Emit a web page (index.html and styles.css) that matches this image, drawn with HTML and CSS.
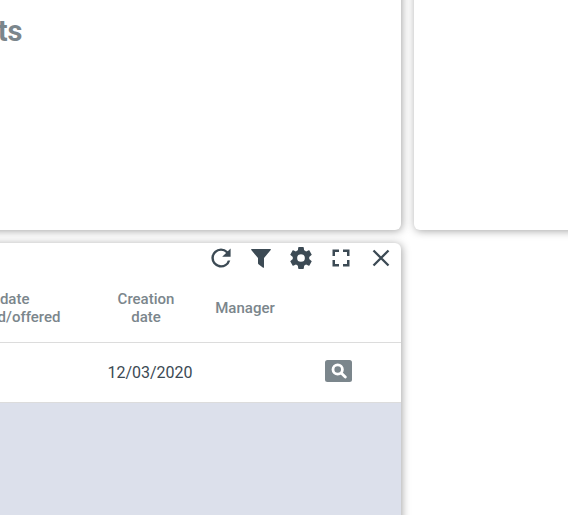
FILE: index.html
```
<!DOCTYPE html>
<html lang="en">
<head>
<meta charset="utf-8">
<title>Dashboard</title>
<link rel="stylesheet" href="styles.css">
</head>
<body>
<main class="board">
  <section class="card card-top"><h1 class="title">ts</h1></section>
  <section class="card card-top"></section>
  <section class="card card-table">
    <div class="toolbar">
      <svg class="tool" viewBox="2 2 20 20"><path d="M17.65 6.35A7.958 7.958 0 0 0 12 4a8 8 0 1 0 7.73 10h-2.08A5.99 5.99 0 0 1 12 18a6 6 0 1 1 0-12c1.66 0 3.14.69 4.22 1.78L13 11h7V4z"/></svg>
      <svg class="tool" viewBox="0 0 24 24"><path d="M2.700 3h18.600c.6 0 .8.700.4 1.100L15 12v9.300c0 .6-.5.700-.9.400L9.500 18.200c-.3-.2-.5-.5-.5-.9V12L2.300 4.100c-.4-.4-.2-1.100.4-1.100z"/></svg>
      <svg class="tool" viewBox="1.100 1.100 21.800 21.800"><path d="M12 15.500A3.500 3.500 0 0 1 8.500 12 3.500 3.500 0 0 1 12 8.500a3.500 3.500 0 0 1 3.500 3.500 3.500 3.500 0 0 1-3.500 3.500m7.430-2.530c.04-.32.070-.64.070-.97s-.03-.66-.07-1l2.110-1.630c.19-.15.240-.42.120-.64l-2-3.460c-.12-.22-.39-.3-.61-.22l-2.490 1c-.52-.39-1.060-.73-1.690-.98l-.37-2.650A.506.506 0 0 0 14 2h-4c-.25 0-.46.18-.5.42l-.37 2.650c-.63.25-1.170.59-1.690.98l-2.490-1c-.22-.08-.49 0-.61.22l-2 3.460c-.13.22-.07.49.12.64L4.570 11c-.04.34-.07.67-.07 1s.03.65.07.97l-2.110 1.660c-.19.15-.25.42-.12.64l2 3.460c.12.22.39.3.61.22l2.490-1.010c.52.4 1.060.74 1.690.99l.37 2.650c.04.24.25.42.5.42h4c.25 0 .46-.18.5-.42l.37-2.650c.63-.26 1.170-.59 1.690-.99l2.490 1.010c.22.08.49 0 .61-.22l2-3.460c.12-.22.070-.49-.12-.64z"/></svg>
      <svg class="tool" viewBox="0 0 24 24"><path d="M3.500 3.500H10V6H6v4H3.500zM14 3.500h6.500V10H18V6h-4zM3.500 14H6v4h4v2.500H3.500zM18 14h2.500v6.500H14V18h4z"/></svg>
      <svg class="tool" viewBox="0 0 24 24"><path d="M4.500 4.500l15 15M19.500 4.500l-15 15" class="line"/></svg>
    </div>
    <div class="row head">
      <div class="cell-first"><span class="short">date</span><span>d/offered</span></div>
      <div class="cell-date">Creation<br>date</div>
      <div class="cell-manager">Manager</div>
    </div>
    <div class="row data">
      <div class="cell-first"></div>
      <div class="cell-date">12/03/2020</div>
      <div class="cell-manager"></div>
      <button class="view" aria-label="View"><svg viewBox="0 0 16 16"><circle cx="6.700" cy="6.500" r="4.700"/><path d="M10.200 10l4.100 4"/></svg></button>
    </div>
    <div class="empty"></div>
  </section>
</main>
</body>
</html>
```
FILE: styles.css
```
* { box-sizing: border-box; }
body {
  display: flow-root;
  margin: 0;
  height: 515px;
  overflow: hidden;
  background: #fff;
  font-family: Roboto, sans-serif;
  color: #3c4a54;
}
.board {
  display: grid;
  grid-template-columns: 421px 1fr;
  grid-template-rows: 250px 1fr;
  gap: 13px;
  width: 608px;
  height: 555px;
  margin: -20px 0 0 -20px;
}
.card {
  background: #fff;
  box-shadow: 1px 1px 8px rgba(0, 0, 0, .36);
  overflow: hidden;
}
.card-top { border-radius: 0 0 6px 6px; padding-top: 20px; }
.card-table {
  display: flex;
  flex-direction: column;
  padding-left: 20px;
  border-radius: 6px 6px 0 0;
}
.title {
  display: flex;
  justify-content: flex-end;
  width: 42.5px;
  margin: 14px 0 0;
  font-size: 29px;
  line-height: 34px;
  font-weight: 700;
  color: #7b868c;
}
.toolbar {
  display: flex;
  justify-content: flex-end;
  gap: 16px;
  height: 30px;
  padding: 3px 8px 0 0;
}
.tool { width: 24px; height: 24px; fill: #3c4a54; }
.line { fill: none; stroke: #3c4a54; stroke-width: 2.3; }
.row { display: flex; align-items: center; flex: none; }
.head {
  height: 70px;
  border-bottom: 1px solid #dcdcdc;
  font-size: 15px;
  line-height: 18px;
  font-weight: 500;
  color: #7b868c;
  text-align: center;
}
.cell-first {
  display: flex;
  flex-direction: column;
  align-items: flex-end;
  width: 61px;
}
.head .cell-first { width: 60.5px; margin-right: .5px; }
.short { margin-right: 31px; }
.cell-date { width: 100px; margin-left: 35px; text-align: center; }
.cell-manager { width: 98px; }
.data { height: 60px; font-size: 16px; border-bottom: 1px solid #dcdcdc; }
.data .cell-date { margin-left: 39px; }
.view {
  display: flex;
  align-items: center;
  justify-content: center;
  width: 27px;
  height: 22px;
  margin: 0 0 3px 26.5px;
  padding: 0;
  border: 0;
  border-radius: 2.5px;
  background: #7b868c;
}
.view svg {
  width: 16px;
  height: 16px;
  margin-left: 1px;
  fill: none;
  stroke: #fff;
  stroke-width: 2.8;
  stroke-linecap: round;
}
.empty { flex: 1; background: #dce0eb; }
```
